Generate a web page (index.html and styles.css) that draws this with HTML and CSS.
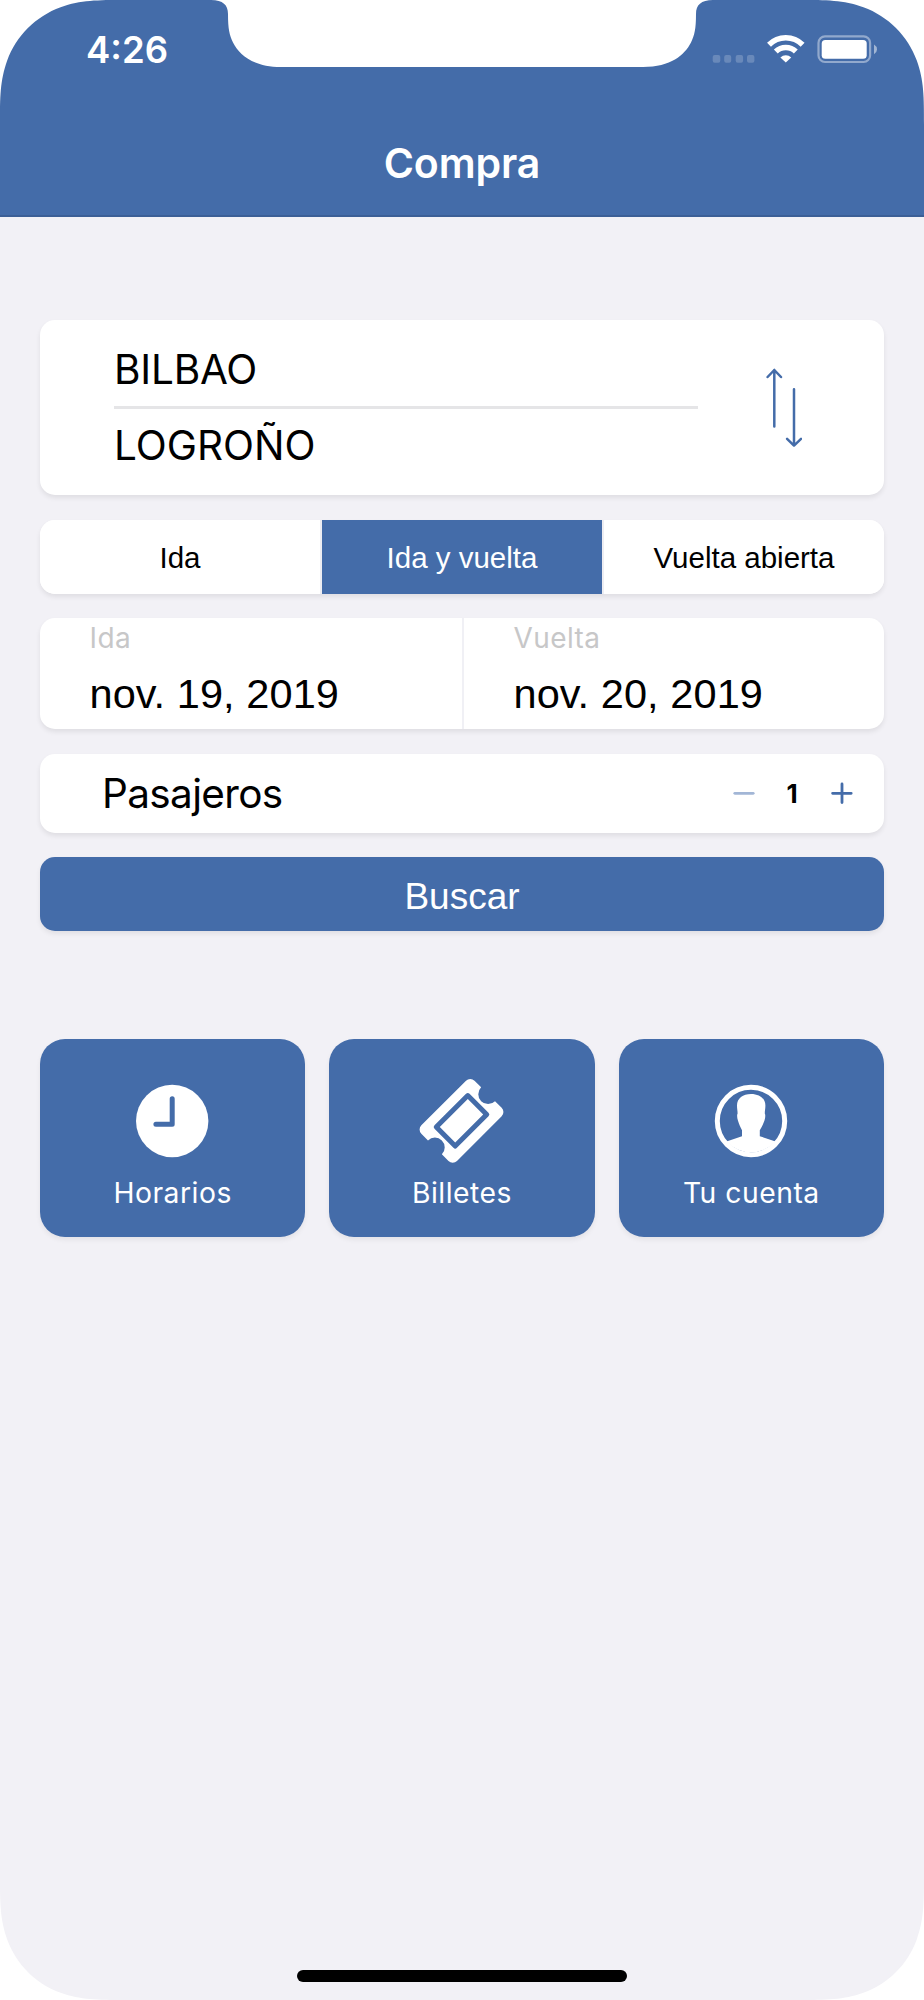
FILE: index.html
```html
<!DOCTYPE html>
<html lang="es">
<head>
<meta charset="utf-8">
<title>Compra</title>
<link rel="stylesheet" href="styles.css">
</head>
<body>
<div class="phone">
  <header class="header">
    <div class="status">
      <span class="clock">4:26</span>
      <svg class="status-icons" width="170" height="32" viewBox="0 0 170 32">
        <g fill="#fff" fill-opacity=".2">
          <rect x="2.7" y="21" width="7.6" height="7.7" rx="2"/>
          <rect x="14.2" y="21" width="7" height="7.7" rx="2"/>
          <rect x="25.7" y="21" width="7.4" height="7.7" rx="2"/>
          <rect x="37" y="21" width="7.4" height="7.7" rx="2"/>
        </g>
        <g fill="none" stroke="#fff" stroke-width="5.5">
          <path d="M59 10.8A23.7 23.7 0 0 1 92.6 10.8"/>
          <path d="M65.8 17.5A14.2 14.2 0 0 1 85.8 17.5"/>
        </g>
        <path d="M75.8 28.6L70.4 23.4A8 8 0 0 1 81.2 23.4Z" fill="#fff"/>
        <rect x="108.5" y="2.4" width="51.6" height="25.6" rx="6.5" fill="none" stroke="#fff" stroke-opacity=".42" stroke-width="2.2"/>
        <rect x="111.7" y="6.1" width="45" height="18.7" rx="3.6" fill="#fff"/>
        <path d="M164 10.6Q167 12.4 167 15.4Q167 18.4 164 20.2Z" fill="#fff" fill-opacity=".5"/>
      </svg>
    </div>
    <h1 class="title">Compra</h1>
  </header>

  <main class="content">
    <section class="card route">
      <div class="stations">
        <div class="station station-from">BILBAO</div>
        <div class="station station-to">LOGROÑO</div>
      </div>
      <svg class="swap" width="36" height="80" viewBox="0 0 36 80" fill="none" stroke="#446ca9" stroke-width="2.5" stroke-linecap="round" stroke-linejoin="round">
        <path d="M8.3 58.6V2M1.6 9L8.3 2L15 9"/>
        <path d="M28 21.2V77.6M21.1 70.8L28 77.6L35 70.8"/>
      </svg>
    </section>

    <section class="card segments">
      <div class="segment">Ida</div>
      <div class="segment segment-active">Ida y vuelta</div>
      <div class="segment">Vuelta abierta</div>
    </section>

    <section class="card dates">
      <div class="date">
        <div class="date-label">Ida</div>
        <div class="date-value">nov. 19, 2019</div>
      </div>
      <div class="date">
        <div class="date-label">Vuelta</div>
        <div class="date-value">nov. 20, 2019</div>
      </div>
    </section>

    <section class="card passengers">
      <span class="passengers-label">Pasajeros</span>
      <div class="stepper">
        <svg width="22" height="22" viewBox="0 0 22 22" stroke="#a2b6d6" stroke-width="2.8" stroke-linecap="round"><path d="M1.8 11.3H20.2"/></svg>
        <span class="count">1</span>
        <svg width="22" height="22" viewBox="0 0 22 22" stroke="#446ca9" stroke-width="2.8" stroke-linecap="round"><path d="M1.6 11.3H20.2M11 2V20.6"/></svg>
      </div>
    </section>

    <div class="search">Buscar</div>

    <nav class="tiles">
      <div class="tile">
        <svg width="90" height="90" viewBox="0 0 90 90">
          <circle cx="44.2" cy="45" r="36.2" fill="#fff"/>
          <path d="M44.2 22.8V48.3H27.9" fill="none" stroke="#446ca9" stroke-width="5" stroke-linecap="round" stroke-linejoin="round"/>
        </svg>
        <span class="tile-label">Horarios</span>
      </div>
      <div class="tile">
        <svg width="90" height="90" viewBox="0 0 90 90">
          <g transform="translate(44.5 44.8) rotate(-45)">
            <path d="M-31.6 -25.2H31.6A6 6 0 0 1 37.6 -19.2V-9.8A9.8 9.8 0 0 0 37.6 9.8V19.2A6 6 0 0 1 31.6 25.2H-31.6A6 6 0 0 1 -37.6 19.2V9.8A9.8 9.8 0 0 0 -37.6 -9.8V-19.2A6 6 0 0 1 -31.6 -25.2Z" fill="#fff"/>
            <rect x="-22.3" y="-13.4" width="44.6" height="26.8" fill="none" stroke="#446ca9" stroke-width="5" stroke-linejoin="round"/>
          </g>
        </svg>
        <span class="tile-label">Billetes</span>
      </div>
      <div class="tile">
        <svg width="90" height="90" viewBox="0 0 90 90">
          <circle cx="45" cy="45" r="33.7" fill="none" stroke="#fff" stroke-width="5"/>
          <path d="M45 17.9C37 17.9 31 22 31 29.5C31 33 31.6 34.5 31.6 37.5C30.8 38.5 31 42 32 44.8C33 48 34.5 51.5 36 54.3V60.2L20.5 65.5A33 33 0 0 0 69.5 65.5L53.8 60.2V54.3C55.6 51.5 57.2 48 58.4 44.8C59.4 42 59.6 38.5 58.8 37.5C58.8 34.5 59.4 33 59.4 29.5C59.4 22 53 17.9 45 17.9Z" fill="#fff"/>
        </svg>
        <span class="tile-label">Tu cuenta</span>
      </div>
    </nav>
  </main>

  <div class="home-bar"></div>

  <svg class="bezel" width="924" height="2000" viewBox="0 0 924 2000" fill="#fff">
    <defs>
      <path id="corner" d="M0 0H125C97 0 81 0 60.6 7.2C35.8 16.2 16.2 35.8 7.2 60.6C0 81 0 97 0 125Z"/>
    </defs>
    <use href="#corner"/>
    <use href="#corner" transform="translate(924 0) scale(-1 1)"/>
    <use href="#corner" transform="translate(0 2000) scale(1 -1)"/>
    <use href="#corner" transform="translate(924 2000) scale(-1 -1)"/>
    <path d="M211 0C223 0 228 5 228 14C228 29 229.5 35 233 42.5C239.5 55 253 67 281 67H643C671 67 684.5 55 691 42.5C694.5 35 696 29 696 14C696 5 701 0 713 0Z"/>
  </svg>
</div>
</body>
</html>
```
FILE: styles.css
```css
* {
  box-sizing: border-box;
}

body {
  margin: 0;
  background: #fff;
  font-family: Inter, "Noto Sans", sans-serif;
  color: #000;
}

.phone {
  position: relative;
  display: flex;
  flex-direction: column;
  width: 924px;
  height: 2000px;
  overflow: hidden;
  background: #f2f1f6;
}

.header {
  height: 217px;
  background: #446ca9;
  border-bottom: 2px solid #3c5f96;
  color: #fff;
}

.status {
  display: flex;
  justify-content: space-between;
  align-items: flex-start;
  height: 98px;
  padding: 34px 44px 0 86px;
}

.clock {
  padding-top: 1px;
  font-size: 36.5px;
  font-weight: 600;
  line-height: 31px;
}

.title {
  margin: 40px 0 0;
  font-size: 41px;
  font-weight: 600;
  letter-spacing: -.1px;
  line-height: 50px;
  text-align: center;
}

.content {
  display: flex;
  flex-direction: column;
  padding: 103px 40px 0;
}

.card {
  background: #fff;
  border-radius: 15px;
  box-shadow: 0 3px 5px rgba(0, 0, 0, .08);
}

.route {
  display: flex;
  justify-content: space-between;
  align-items: flex-start;
  height: 175px;
  padding: 20px 82px 0 74px;
}

.stations {
  width: 584px;
}

.station {
  padding-bottom: 6px;
  font-size: 40.5px;
  line-height: 60px;
}

.station-from {
  letter-spacing: -.2px;
}

.station-to {
  padding-top: 7px;
  border-top: 3px solid #e5e5e7;
}

.swap {
  margin-top: 28px;
}

.segments {
  display: grid;
  grid-template-columns: repeat(3, 280px);
  gap: 2px;
  height: 74px;
  margin-top: 24.5px;
  background: linear-gradient(#ededf2, #ededf2) center / 284px 100% no-repeat #fff;
  overflow: hidden;
}

.segment {
  padding-top: 1px;
  background: #fff;
  font-family: "Liberation Sans", Arial, sans-serif;
  font-size: 29.5px;
  line-height: 74px;
  text-align: center;
}

.segment-active {
  background: #446ca9;
  color: #fff;
}

.dates {
  display: grid;
  grid-template-columns: 1fr 1fr;
  height: 111px;
  margin-top: 24.5px;
}

.date {
  padding: 4.5px 0 0 49.5px;
}

.date + .date {
  border-left: 2px solid #f0f0f5;
}

.date:first-child {
  margin-right: -1.5px;
}

.date-label {
  color: #c7c7c8;
  font-size: 28px;
  letter-spacing: .4px;
  line-height: 30px;
}

.date-value {
  margin-top: 16px;
  font-family: "Liberation Sans", Arial, sans-serif;
  font-size: 41.5px;
  letter-spacing: .08px;
  line-height: 50px;
}

.passengers {
  display: flex;
  justify-content: space-between;
  align-items: center;
  height: 79px;
  margin-top: 24.5px;
  padding: 0 31px 0 62px;
}

.passengers-label {
  font-size: 40.5px;
  letter-spacing: -.65px;
}

.stepper {
  display: flex;
  align-items: center;
  justify-content: space-between;
  width: 120px;
}

.count {
  margin-right: 2px;
  font-size: 26px;
  font-weight: 700;
}

.search {
  height: 74px;
  margin-top: 24.5px;
  padding-top: 5px;
  border-radius: 15px;
  background: #446ca9;
  box-shadow: 0 3px 5px rgba(0, 0, 0, .07);
  color: #fff;
  font-family: "Liberation Sans", Arial, sans-serif;
  font-size: 37px;
  line-height: 70px;
  text-align: center;
}

.tiles {
  display: grid;
  grid-template-columns: repeat(3, 1fr);
  gap: 24px;
  margin-top: 108px;
}

.tile {
  display: flex;
  flex-direction: column;
  align-items: center;
  height: 197.5px;
  padding-top: 37px;
  border-radius: 25px;
  background: #446ca9;
  box-shadow: 0 3px 5px rgba(0, 0, 0, .06);
  color: #fff;
}

.tile-label {
  margin-top: 9px;
  font-size: 28.3px;
  letter-spacing: .5px;
  line-height: 36px;
}

.home-bar {
  width: 330px;
  height: 12px;
  margin: auto auto 18px;
  border-radius: 6px;
  background: #000;
}

.bezel {
  position: absolute;
  inset: 0;
}
```
